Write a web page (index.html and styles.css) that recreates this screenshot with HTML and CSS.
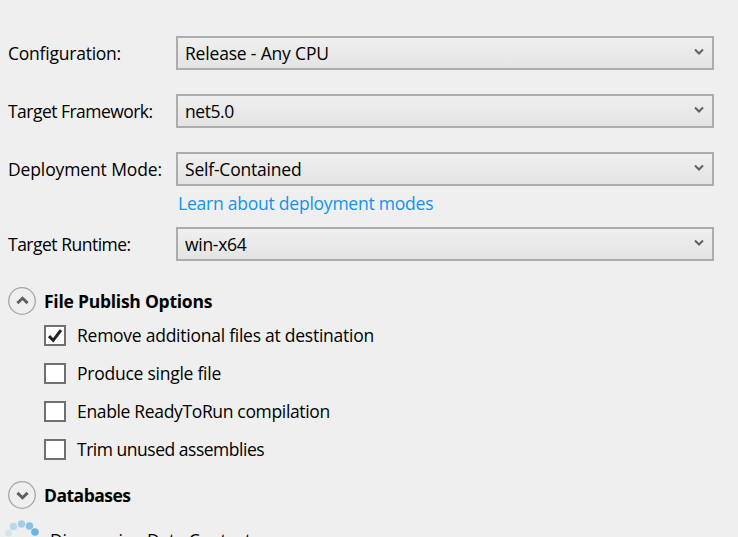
FILE: index.html
```html
<!DOCTYPE html>
<html lang="en">
<head>
<meta charset="utf-8">
<title>Profile settings</title>
<link rel="stylesheet" href="styles.css">
</head>
<body>
<main class="settings">
  <div class="field">
    <span class="label"><span class="t-config">Configuration:</span></span>
    <div class="select"><span class="t-release">Release - Any CPU</span><svg class="caret" viewBox="0 0 10 8"><path d="M1 1.5 5 5.5 9 1.5"/></svg></div>
  </div>
  <div class="field">
    <span class="label"><span class="t-framework">Target Framework:</span></span>
    <div class="select"><span class="t-net">net5.0</span><svg class="caret" viewBox="0 0 10 8"><path d="M1 1.5 5 5.5 9 1.5"/></svg></div>
  </div>
  <div class="field field-mode">
    <span class="label"><span class="t-mode">Deployment Mode:</span></span>
    <div class="select"><span class="t-self">Self-Contained</span><svg class="caret" viewBox="0 0 10 8"><path d="M1 1.5 5 5.5 9 1.5"/></svg></div>
  </div>
  <a class="link"><span class="t-learn">Learn about deployment modes</span></a>
  <div class="field">
    <span class="label"><span class="t-runtime">Target Runtime:</span></span>
    <div class="select"><span class="t-win">win-x64</span><svg class="caret" viewBox="0 0 10 8"><path d="M1 1.5 5 5.5 9 1.5"/></svg></div>
  </div>

  <div class="section">
    <svg class="expander" viewBox="0 0 28 28"><circle cx="14" cy="14" r="13.3"/><path d="M9.4 16.1 14.5 11.3 19.6 16.1"/></svg>
    <span class="t-publish">File Publish Options</span>
  </div>
  <div class="options">
    <div class="option"><span class="box"><svg class="check" viewBox="0 0 18 17"><path d="M3 9.1 7.2 13.3 15 3.2"/></svg></span><span class="text t-remove">Remove additional files at destination</span></div>
    <div class="option"><span class="box"></span><span class="text t-single">Produce single file</span></div>
    <div class="option"><span class="box"></span><span class="text t-ready">Enable ReadyToRun compilation</span></div>
    <div class="option"><span class="box"></span><span class="text t-trim">Trim unused assemblies</span></div>
  </div>
  <div class="section">
    <svg class="expander" viewBox="0 0 28 28"><circle cx="14" cy="14" r="13.3"/><path d="M9.4 11.9 14.5 16.7 19.6 11.9"/></svg>
    <span class="t-databases">Databases</span>
  </div>
  <div class="loading">
    <svg class="spinner" viewBox="0 0 36 36">
      <circle cx="4.5" cy="13" r="3.6" fill="#d7e4ec"/>
      <circle cx="9.5" cy="6.5" r="3.7" fill="#bdd8ea"/>
      <circle cx="17.5" cy="4" r="3.7" fill="#a3cce7"/>
      <circle cx="25.5" cy="6" r="3.7" fill="#8bc0e4"/>
      <circle cx="31" cy="12" r="3.8" fill="#6fb2e0"/>
    </svg>
    <span class="t-discover">Discovering Data Contexts...</span>
  </div>
</main>
</body>
</html>
```
FILE: styles.css
```css
html, body { margin: 0; height: 100%; overflow: hidden; }
body {
  background: #efefef;
  color: #000;
  font-family: "Open Sans", "Noto Sans", sans-serif;
  font-size: 17.5px;
  line-height: 24px;
  white-space: nowrap;
}
.settings { box-sizing: border-box; height: 537px; padding: 36px 24px 0 8px; overflow: hidden; }
.field { display: grid; grid-template-columns: 168px 538px; height: 34px; align-items: center; margin-bottom: 24px; }
.field-mode { margin-bottom: 0; }
.select {
  box-sizing: border-box;
  display: flex;
  align-items: center;
  justify-content: space-between;
  height: 34px;
  padding: 0 8px 0 7px;
  border: 2px solid #acacac;
  background: linear-gradient(#efefef, #e4e4e4);
}
.caret { width: 10px; height: 8px; margin-bottom: 3px; fill: none; stroke: #606060; stroke-width: 2; }
.link { display: block; height: 30px; margin: 5px 0 6px 170px; color: #0c95f5; }
.section { display: flex; align-items: center; gap: 8px; height: 28px; font-weight: 700; }
.field + .section { margin-top: 26px; }
.expander { width: 28px; height: 28px; fill: none; stroke: #606060; stroke-width: 2.9; }
.expander circle { stroke: #a6a6a6; stroke-width: 1.3; }
.options { margin: 7px 0 0 36px; height: 159px; }
.option { display: flex; align-items: center; gap: 11px; height: 27px; margin-bottom: 11px; }
.text { margin-bottom: 2px; }
.box { box-sizing: border-box; width: 22px; height: 21px; border: 2px solid #707070; background: #fff; }
.check { display: block; width: 18px; height: 17px; fill: none; stroke: #212121; stroke-width: 3; }
.loading { display: flex; height: 36px; gap: 10px; margin: 11px 0 0 -4px; }
.spinner { width: 36px; height: 36px; }
.loading span { margin-top: 8px; }

/* Tracking per string */
.t-config { letter-spacing: -0.23px; }
.t-release { letter-spacing: -0.18px; }
.t-framework { letter-spacing: -0.53px; }
.t-net { letter-spacing: -0.45px; }
.t-mode { letter-spacing: -0.12px; }
.t-self { letter-spacing: -0.2px; }
.t-learn { letter-spacing: -0.23px; }
.t-runtime { letter-spacing: -0.5px; }
.t-win { letter-spacing: -0.3px; }
.t-publish { letter-spacing: -0.25px; }
.t-remove { letter-spacing: -0.25px; }
.t-single { letter-spacing: -0.25px; }
.t-ready { letter-spacing: -0.34px; }
.t-trim { letter-spacing: -0.48px; }
.t-databases { letter-spacing: -0.5px; }
.t-discover { letter-spacing: -0.2px; }
```
